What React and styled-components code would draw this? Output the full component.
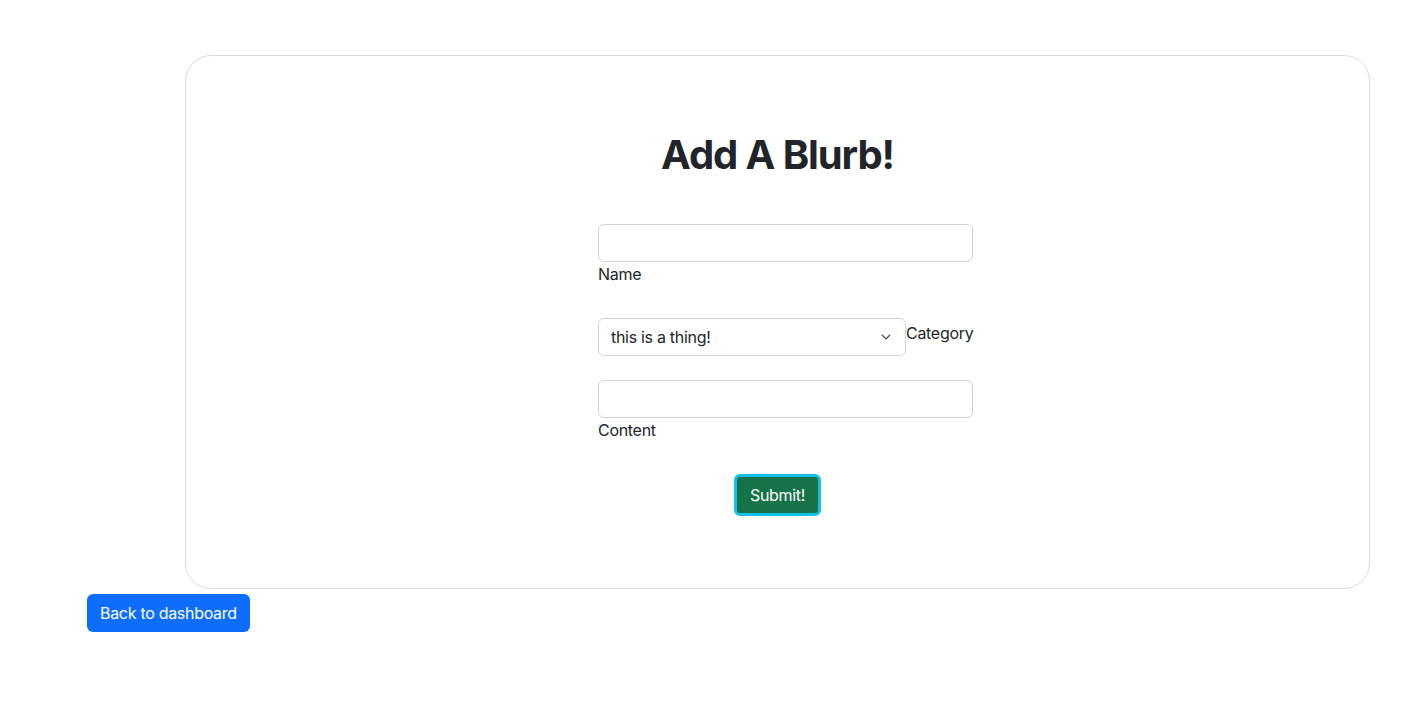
import React from "react";
import styled, { createGlobalStyle } from "styled-components";

const Global = createGlobalStyle`
  html, body { margin: 0; padding: 0; background: #fff; }
  body {
    font-family: Inter, "Noto Sans", "Liberation Sans", sans-serif;
    font-size: 16px;
    line-height: 1.5;
    letter-spacing: -0.3px;
    color: #212529;
  }
  * { box-sizing: border-box; }
`;

const Page = styled.div`
  padding: 55px 43px 0 87px;
`;

const Card = styled.div`
  margin-left: 98px;
  border: 1px solid #dcdcdc;
  border-radius: 26px;
  padding: 75px 0 72px;
  display: flex;
  flex-direction: column;
  align-items: center;
`;

const Title = styled.h1`
  margin: 0 0 45px;
  font-size: 40px;
  font-weight: 700;
  line-height: 48px;
  letter-spacing: -1.1px;
  color: #212529;
`;

const Form = styled.form`
  width: 375px;
  margin-left: 16px;
  display: flex;
  flex-direction: column;
`;

const Group = styled.div`
  display: flex;
  flex-wrap: ${(p) => (p.$inline ? "nowrap" : "wrap")};
  align-items: flex-start;
  margin-bottom: ${(p) => p.$gap}px;
`;

const Input = styled.input`
  width: 100%;
  height: 38px;
  padding: 6px 12px;
  border: 1px solid #ced4da;
  border-radius: 6px;
  font: inherit;
  letter-spacing: -0.3px;
  color: #212529;
  background: #fff;
`;

const Label = styled.label`
  display: block;
  font-size: 16px;
  line-height: 24px;
  white-space: nowrap;
  margin-top: ${(p) => p.$top || 0}px;
`;

const SelectWrap = styled.div`
  position: relative;
  width: 308px;
  flex-shrink: 0;
`;

const Select = styled.select`
  appearance: none;
  -webkit-appearance: none;
  width: 100%;
  height: 38px;
  padding: 6px 36px 6px 12px;
  border: 1px solid #ced4da;
  border-radius: 6px;
  font: inherit;
  letter-spacing: -0.3px;
  color: #212529;
  background: #fff;
`;

const Chevron = styled.svg`
  position: absolute;
  right: 14px;
  top: 14px;
  pointer-events: none;
`;

const SubmitRow = styled.div`
  display: flex;
  justify-content: center;
  margin-left: -16px;
  margin-top: 32px;
`;

const Button = styled.button`
  font: inherit;
  font-size: 16px;
  line-height: 24px;
  letter-spacing: -0.3px;
  padding: ${(p) => (p.$ring ? "6px 13px" : "7px 13px")};
  border-radius: 6px;
  color: #fff;
  cursor: pointer;
  background: ${(p) => p.$bg};
  border: ${(p) => (p.$ring ? "3px solid #14c0e8" : "0")};
`;

const BackRow = styled.div`
  margin-top: 5px;
`;

export default function App() {
  return (
    <>
      <Global />
      <Page>
        <Card>
          <Title>Add A Blurb!</Title>
          <Form onSubmit={(e) => e.preventDefault()}>
            <Group $gap={32}>
              <Input id="name" type="text" />
              <Label htmlFor="name">Name</Label>
            </Group>
            <Group $gap={24} $inline>
              <SelectWrap>
                <Select id="category" defaultValue="thing">
                  <option value="thing">this is a thing!</option>
                </Select>
                <Chevron width="12" height="10" viewBox="0 0 16 16">
                  <path
                    d="M2 5l6 6 6-6"
                    fill="none"
                    stroke="#343a40"
                    strokeWidth="2"
                    strokeLinecap="round"
                    strokeLinejoin="round"
                  />
                </Chevron>
              </SelectWrap>
              <Label htmlFor="category" $top={3}>Category</Label>
            </Group>
            <Group $gap={0}>
              <Input id="content" type="text" />
              <Label htmlFor="content">Content</Label>
            </Group>
            <SubmitRow>
              <Button type="submit" $bg="#157347" $ring>
                Submit!
              </Button>
            </SubmitRow>
          </Form>
        </Card>
        <BackRow>
          <Button type="button" $bg="#0d6efd">
            Back to dashboard
          </Button>
        </BackRow>
      </Page>
    </>
  );
}
